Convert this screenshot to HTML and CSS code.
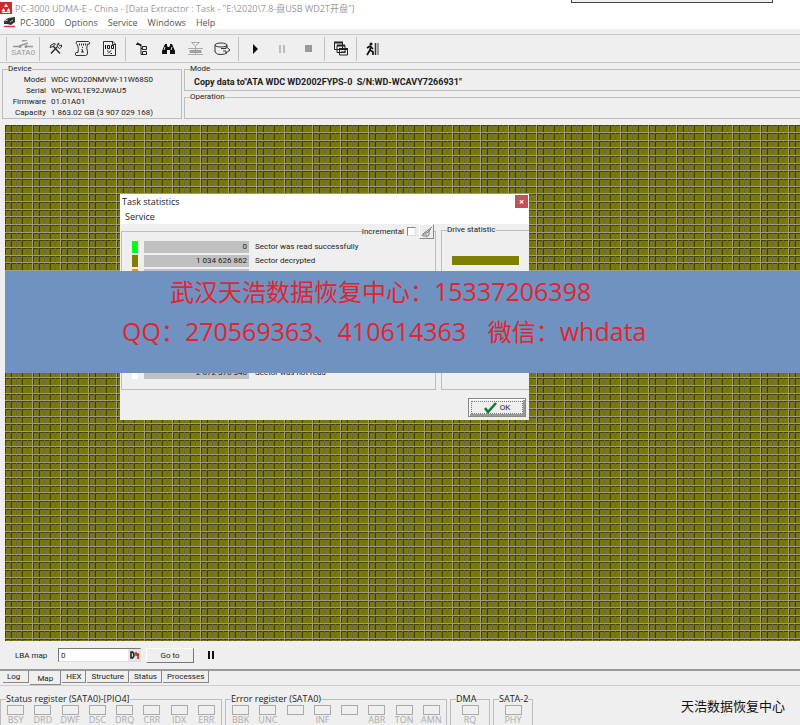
FILE: index.html
```html
<!DOCTYPE html>
<html lang="en">
<head>
<meta charset="utf-8">
<title>PC-3000 UDMA-E</title>
<link rel="stylesheet" href="styles.css">
</head>
<body>
<div class="corner-box"></div>
<header class="titlebar">
  <svg class="app-icon" width="12" height="12" viewBox="0 0 12 12"><rect width="12" height="12" fill="#d3262d"/><path d="M6 1.500L8 5H4ZM3.500 6L5.500 9.500H1.500ZM8.500 6L10.500 9.500H6.500Z" fill="#fff"/><path d="M2 10.500H10" stroke="#fff"/></svg>
  <span>PC-3000 UDMA-E - China - [Data Extractor : Task - "E:\2020\7.8-盘USB WD2T开盘"]</span>
</header>
<nav class="menubar">
  <svg width="11" height="11" viewBox="0 0 11 11"><path d="M0 4L4 1L11 0V5L7 8L3 7H0Z" fill="#333"/><path d="M1 4L4 3M6 5L9 3" stroke="#bbb"/><path d="M0 9.500H11" stroke="#dd3840" stroke-width="1.500"/></svg>
  <a href="#">PC-3000</a><a href="#">Options</a><a href="#">Service</a><a href="#">Windows</a><a href="#">Help</a>
</nav>

<div class="toolbar">
  <i class="sep"></i>
  <button class="tool sata" aria-label="SATA0"><svg width="20" height="9" viewBox="0 0 20 9"><path d="M0 6.500H6M13 6.500H20M6 6L15 3M9 1L14 0" stroke="#999" fill="none" stroke-width="1.500"/><circle cx="7" cy="6.500" r="1.500" fill="#999"/><circle cx="13" cy="6.500" r="1.500" fill="#999"/></svg><span>SATA0</span></button>
  <i class="sep"></i>
  <button class="tool" aria-label="Tools"><svg width="13" height="13" viewBox="0 0 13 13" fill="none" stroke="#333"><path d="M2 11.500L8 5M4 4L11 11.500" stroke-width="1.500"/><path d="M1 5.500L2 3L5 1.500L6.500 2L4 4.500ZM8 2.500L10 1L9.500 3L11 4L12.500 3V5L10.500 6.500L8.500 5Z"/></svg></button>
  <button class="tool" aria-label="Information"><svg width="17" height="17" viewBox="0 0 17 17" fill="none" stroke="#333"><path d="M2.500 1.500H14.500Q16 2 15.500 4H13.500Q12 8 13.500 12Q14 15.500 11.500 15.500H2Q.5 14 2 12.500H4Q5 8 3.500 5Q1 3 2.500 1.500"/><path d="M5 4.500H12" stroke-dasharray="1 1" stroke-width="2"/><path d="M8.500 7V8M7.500 9.500H8.500V12M7 12H10"/></svg></button>
  <button class="tool" aria-label="Report"><svg width="15" height="17" viewBox="0 0 15 17" fill="none" stroke="#333"><path d="M1.500 1.500H11L13.500 4V15.500H1.500ZM10.500 1.500V4.500H13.500"/><path d="M3.500 5V9M5.500 5.500H7.500V8.500H5.500ZM9.500 5.500H11.500V8.500H9.500ZM6 13.500L9 10.500M5 11H6.500M8.500 13.500H10" stroke="#111"/></svg></button>
  <i class="sep"></i>
  <button class="tool" aria-label="Tree"><svg width="14" height="14" viewBox="0 0 14 14" fill="none" stroke="#222"><path d="M1 2.500H6V12.500H8M6 6.500H8"/><path d="M2 1L6 3.500" stroke-width="2"/><path d="M7.500 4.500H11.500V7.500H7.500ZM7.500 9.500H11.500V12.500H7.500Z"/></svg></button>
  <button class="tool" aria-label="Find"><svg width="13" height="12" viewBox="0 0 13 12"><path d="M3 1H5V3L6 4H7L8 3V1H10L13 8V11H8V7H5V11H0V8Z" fill="#111"/><path d="M2 7L3 4M10 4L9 7" stroke="#ddd"/></svg></button>
  <button class="tool" aria-label="Transfer"><svg width="17" height="15" viewBox="0 0 17 15" fill="none" stroke="#aaa"><path d="M4.500 1.500H12.500L8.500 5ZM8.500 5V14M1 7.500H16M1 13.500H16"/><path d="M3 9.500H14V11.500H3Z" stroke="#999" fill="#aaa"/></svg></button>
  <button class="tool" aria-label="Disk"><svg width="17" height="14" viewBox="0 0 17 14" fill="none" stroke="#333"><ellipse cx="7" cy="3" rx="6" ry="2"/><path d="M1 3V10Q3 13 7 12.500Q11 12.500 13 11M13 3V5M7 6.500H12V4.500L16 8L12 11V9H9"/></svg></button>
  <i class="sep"></i>
  <button class="tool" aria-label="Start"><svg width="6" height="10" viewBox="0 0 6 10"><path d="M1 0L6 5L1 10Z" fill="#111"/></svg></button>
  <button class="tool" aria-label="Pause"><svg width="6" height="10" viewBox="0 0 6 10"><path d="M1 1V9M5 1V9" stroke="#aaa" stroke-width="1.500"/></svg></button>
  <button class="tool" aria-label="Stop"><svg width="7" height="7" viewBox="0 0 7 7"><path d="M0 0H7V7H0Z" fill="#999"/></svg></button>
  <i class="sep"></i>
  <button class="tool" aria-label="Windows"><svg width="14" height="15" viewBox="0 0 14 15" fill="#eee" stroke="#222"><path d="M.5 1.500H8.500V8.500H.5ZM3 4.500H11V11.500H3ZM5.500 7.500H13.500V14H5.500Z"/><path d="M0 1.500H9M3 4.500H11M5 8H14" stroke-width="2"/><path d="M7 11H12"/></svg></button>
  <i class="sep"></i>
  <button class="tool" aria-label="Exit"><svg width="14" height="14" viewBox="0 0 14 14" fill="none" stroke="#111"><circle cx="5" cy="2" r="1.500" fill="#111" stroke="none"/><path d="M5 4L4 8L7 10V13M4 8L1 13M1 6L4 4L7 7" stroke-width="1.700"/><path d="M9.500 1V13" stroke="#333" stroke-width="1.500"/><path d="M12 1V13" stroke="#999" stroke-width="2"/></svg></button>
</div>

<section class="info">
  <fieldset class="group device">
    <legend>Device</legend>
    <dl>
      <dt>Model</dt><dd>WDC WD20NMVW-11W68S0</dd>
      <dt>Serial</dt><dd>WD-WXL1E92JWAU5</dd>
      <dt>Firmware</dt><dd>01.01A01</dd>
      <dt>Capacity</dt><dd>1 863.02 GB (3 907 029 168)</dd>
    </dl>
  </fieldset>
  <div class="modes">
    <fieldset class="group"><legend>Mode</legend><p>Copy data to"ATA WDC WD2002FYPS-0&nbsp; S/N:WD-WCAVY7266931"</p></fieldset>
    <fieldset class="group"><legend>Operation</legend></fieldset>
  </div>
</section>

<main class="map">
  <svg class="cells" width="100%" height="100%">
    <defs>
      <pattern id="cells" width="28" height="23" patternUnits="userSpaceOnUse">
        <rect width="28" height="23" fill="#42420a"/>
        <path d="M1 1h4v6h-4zM7 1h4v6h-4zM12 1h4v6h-4zM18 1h4v6h-4zM23 1h4v6h-4zM1 9h4v6h-4zM7 9h4v6h-4zM12 9h4v6h-4zM18 9h4v6h-4zM23 9h4v6h-4zM1 17h4v5h-4zM7 17h4v5h-4zM12 17h4v5h-4zM18 17h4v5h-4zM23 17h4v5h-4z" fill="#7a7a08"/>
        <path d="M5.500 0V23M11.500 0V23M16.500 0V23M22.500 0V23" stroke="#6a6548"/>
        <path d="M27.500 0V23" stroke="#a09b88"/>
        <path d="M0 7.500H28M0 15.500H28M0 22.500H28" stroke="#a09b88"/>
      </pattern>
    </defs>
    <rect width="100%" height="100%" fill="url(#cells)"/>
  </svg>

  <section class="dialog" role="dialog" aria-label="Task statistics">
    <header><span>Task statistics</span><button class="close" aria-label="Close">×</button></header>
    <nav><a href="#">Service</a></nav>
    <div class="dialog-body">
      <fieldset class="group stats">
        <legend><label for="inc">Incremental</label><input id="inc" type="checkbox"><button class="pen" aria-label="Clear"><svg width="12" height="12" viewBox="0 0 12 12" fill="none" stroke="#777"><path d="M1 10L3 7L6 5L11 1M3 7V11M5 6V11M8 4V9L5 11M6 7L10 3"/></svg></button></legend>
        <table>
          <tr><td><i class="key green"></i></td><td><b>0</b></td><td>Sector was read successfully</td></tr>
          <tr><td><i class="key olive"></i></td><td><b>1 034 626 862</b></td><td>Sector decrypted</td></tr>
          <tr><td><i class="key orange"></i></td><td><b></b></td><td></td></tr>
          <tr class="spacer"><td colspan="3"></td></tr>
          <tr><td><i class="key white"></i></td><td><b>2 872 376 346</b></td><td>Sector was not read</td></tr>
        </table>
      </fieldset>
      <fieldset class="group drive"><legend>Drive statistic</legend><div class="meter"></div></fieldset>
    </div>
    <footer><button class="ok"><svg width="13" height="12" viewBox="0 0 13 12"><path d="M1 6L4 10L12 1" fill="none" stroke="#0b7a31" stroke-width="2.500"/></svg>OK</button></footer>
  </section>

  <div class="banner">
    <p class="phone">武汉天浩数据恢复中心：<span>15337206398</span></p>
    <p><span>QQ</span>：<span>270569363</span>、<span>410614363</span>&nbsp;&nbsp;&nbsp; 微信：<span>whdata</span></p>
  </div>
</main>

<div class="lba">
  <label for="lba">LBA map</label>
  <div class="field"><input id="lba" type="text" value="0"><button aria-label="Number base"><svg width="9" height="8" viewBox="0 0 9 8" fill="none" stroke-width="1.600"><path d="M1 1V7H2.500Q4 6 4 4Q4 2 2.500 1Z" stroke="#222"/><path d="M6 1V4H9M8 2V8" stroke="#c22"/></svg></button></div>
  <button class="goto">Go to</button>
  <svg width="6" height="8" viewBox="0 0 6 8"><path d="M1 0V8M5 0V8" stroke="#111" stroke-width="2"/></svg>
</div>
<div class="tabs">
  <button>Log</button><button class="active">Map</button><button>HEX</button><button>Structure</button><button>Status</button><button>Processes</button>
</div>

<footer class="registers">
  <fieldset class="group reg wide"><legend>Status register (SATA0)-[PIO4]</legend>
    <ul><li>BSY</li><li>DRD</li><li>DWF</li><li>DSC</li><li>DRQ</li><li>CRR</li><li>IDX</li><li>ERR</li></ul></fieldset>
  <fieldset class="group reg wide"><legend>Error register (SATA0)</legend>
    <ul><li>BBK</li><li>UNC</li><li></li><li>INF</li><li></li><li>ABR</li><li>TON</li><li>AMN</li></ul></fieldset>
  <fieldset class="group reg"><legend>DMA</legend><ul><li>RQ</li></ul></fieldset>
  <fieldset class="group reg"><legend>SATA-2</legend><ul><li>PHY</li></ul></fieldset>
  <span class="credit">天浩数据恢复中心</span>
</footer>
</body>
</html>
```
FILE: styles.css
```css
* { box-sizing: border-box; }

body {
  margin: 0;
  height: 100vh;
  overflow: hidden;
  display: flex;
  flex-direction: column;
  background: #efefef;
  color: #222;
  font: 8px/11px "Roboto", "Noto Sans CJK SC", sans-serif;
}

button, input { font: inherit; color: inherit; margin: 0; padding: 0; }
button { border: 0; background: none; }
a { color: inherit; text-decoration: none; }
p, dl, dd, ul { margin: 0; padding: 0; }
svg { flex: none; display: block; }

.corner-box {
  position: absolute;
  top: 0;
  right: 27px;
  width: 202px;
  height: 3px;
  background: #efefef;
  border: 1px solid #444;
  border-top: 0;
}

.titlebar, .menubar {
  display: flex;
  align-items: center;
  background: #fff;
  font-family: "Open Sans", "Noto Sans CJK SC", sans-serif;
  font-size: 9px;
}
.titlebar { height: 16px; gap: 3px; color: #999; }
.menubar { height: 13px; padding-left: 4px; color: #555; }
.menubar a { margin: 0 5px; }

.toolbar {
  display: flex;
  align-items: center;
  height: 29px;
  margin-top: 5px;
  padding-left: 4px;
  border-top: 1px solid #c8c8c8;
  border-bottom: 1px solid #c8c8c8;
}
.sep { width: 1px; height: 24px; margin: 0 2px; background: #c0c0c0; }
.tool { width: 27px; height: 26px; display: grid; place-items: center; }
.sata { width: 28px; align-content: center; color: #999; font: 8px/8px "Liberation Sans", sans-serif; }

.group { margin: 0; padding: 0; min-width: 0; border: 1px solid #bdbdbd; }
.group legend { margin-left: 5px; padding: 0; line-height: 8px; }

.info { display: flex; gap: 2px; margin-top: 2px; padding-left: 2px; }
.device { width: 180px; height: 54px; }
.device dl { display: grid; grid-template-columns: 43px 1fr; column-gap: 5px; padding-top: 1px; line-height: 11px; }
.device dt { text-align: right; }
.modes { flex: 1; display: grid; gap: 2px; }
.modes fieldset { height: 26px; border-right: 0; }
.modes p { padding: 3px 0 0 9px; font: bold 9px/12px "Roboto", sans-serif; }

.map { position: relative; flex: 1; min-height: 0; margin: 6px 0 0 5px; }
.cells { position: absolute; inset: 0; }

.banner {
  position: absolute;
  top: 146px;
  left: 0;
  right: 0;
  height: 102px;
  padding: 0 0 0 117px;
  background: #6f92c0;
  color: #e22430;
  font: 24px/39px "Noto Sans CJK SC", sans-serif;
  white-space: nowrap;
}
.banner span { font-family: "Open Sans", sans-serif; font-size: 25px; }
.banner .phone { padding-left: 48px; }

.dialog {
  position: absolute;
  top: 69px;
  left: 115px;
  width: 409px;
  height: 226px;
  display: flex;
  flex-direction: column;
  background: #efefef;
}
.dialog header, .dialog nav {
  background: #fff;
  font-family: "Open Sans", sans-serif;
  font-size: 9px;
  line-height: 15px;
}
.dialog header { display: flex; justify-content: space-between; padding: 0 1px 0 2px; }
.dialog nav { padding-left: 5px; }
.close { width: 13px; height: 13px; margin-top: 1px; background: #c75058; color: #fff; font-weight: bold; line-height: 13px; }
.dialog-body { display: flex; gap: 5px; height: 166px; padding-left: 1px; }
.stats { width: 315px; }
.stats legend { display: flex; align-items: center; gap: 3px; height: 15px; margin-left: auto; margin-right: 1px; }
.stats input { appearance: none; width: 9px; height: 9px; background: #fff; border: 1px solid #ddd; border-top-color: #888; border-left-color: #888; }
.pen { width: 15px; height: 15px; display: grid; place-items: center; border: 1px solid #fff; border-right-color: #888; border-bottom-color: #888; }
.stats table { border-collapse: collapse; margin: 1px 0 0 10px; }
.stats td { height: 14px; padding: 0 6px 0 0; line-height: 12px; }
.stats .spacer td { height: 84px; }
.stats b { display: block; width: 105px; height: 12px; padding-right: 2px; background: #c0c0c0; font-weight: normal; text-align: right; }
.key { display: block; width: 6px; height: 12px; }
.green { background: #00ff18; }
.olive { background: #808000; }
.orange { background: #ef8a20; }
.white { background: #fff; }
.drive { flex: 1; margin-top: 2px; border-right: 0; }
.meter { height: 9px; margin: 22px 10px 0; background: #808000; }
.dialog footer { display: flex; justify-content: flex-end; padding: 8px 3px 0; }
.ok {
  display: flex;
  align-items: center;
  justify-content: center;
  gap: 3px;
  width: 58px;
  height: 19px;
  border: 1px solid #888;
  outline: 1px dotted #777;
  outline-offset: -4px;
  box-shadow: inset 1px 1px #fff, inset -2px -2px #999;
}

.lba { display: flex; align-items: center; height: 28px; padding-left: 15px; }
.lba label { width: 31px; white-space: nowrap; }
.lba .field { display: flex; align-items: center; width: 83px; height: 14px; margin: 0 5px 0 12px; background: #fff; border: 1px solid #ddd; border-top-color: #777; border-left-color: #777; }
.field input { flex: 1; min-width: 0; border: 0; padding-left: 2px; background: none; outline: 0; }
.field button { width: 12px; height: 12px; display: grid; place-items: center; background: #e5e5e5; }
.goto { width: 48px; height: 15px; margin-right: 14px; border: 1px solid #fff; border-right-color: #777; border-bottom-color: #777; }

.tabs { display: flex; align-items: flex-start; height: 17px; padding-left: 3px; border-top: 2px solid #999; border-bottom: 1px solid #ccc; }
.tabs button { height: 12px; padding: 0 4px; margin-right: 1px; border-right: 1px solid #888; border-bottom: 1px solid #888; }
.tabs button:first-child { padding-right: 8px; }
.tabs .active { height: 14px; padding: 2px 7px 0; background: #efefef; }

.registers { display: flex; gap: 3px; height: 39px; padding-top: 8px; overflow: hidden; font-family: "Open Sans", sans-serif; font-size: 9px; }
.reg { height: 60px; width: 40px; }
.wide { width: 222px; }
.reg legend { line-height: 10px; white-space: nowrap; }
.reg ul { display: flex; list-style: none; padding: 1px 1px 0; }
.reg li { flex: 1; color: #aaa; text-align: center; line-height: 9px; }
.reg li::before { content: ""; display: block; width: 15px; height: 8px; margin: 0 auto; border: 1px solid #aaa; }
.credit { margin: 4px 15px 0 auto; color: #111; font: 13px/16px "Noto Sans CJK SC", sans-serif; }
```
